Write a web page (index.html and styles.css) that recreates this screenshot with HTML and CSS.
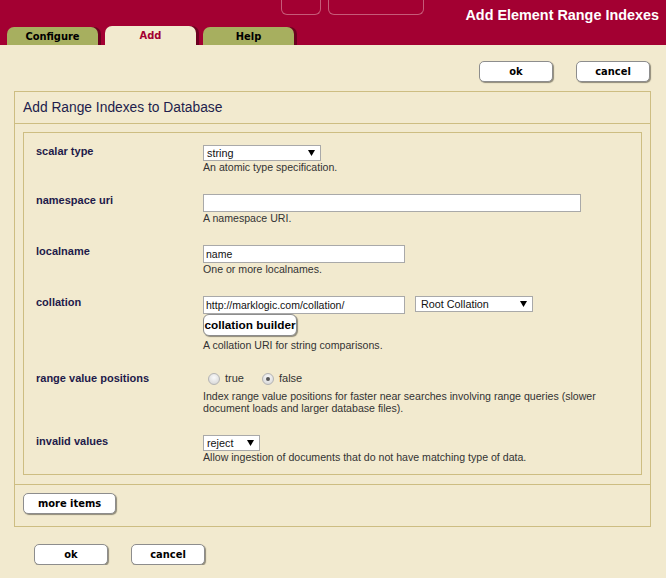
FILE: index.html
```html
<!DOCTYPE html>
<html>
<head>
<meta charset="utf-8">
<title>Add Element Range Indexes</title>
<link rel="stylesheet" href="styles.css">
</head>
<body>
<header class="hdr">
  <div class="hdr-top">
    <span class="deco deco1"></span>
    <span class="deco deco2"></span>
    <h1 class="app-title">Add Element Range Indexes</h1>
  </div>
  <nav class="tabs">
    <a class="tab">Configure</a>
    <a class="tab active">Add</a>
    <a class="tab">Help</a>
  </nav>
</header>
<main class="content">
  <div class="actions actions-top">
    <button class="btn btn-ok">ok</button>
    <button class="btn btn-cancel">cancel</button>
  </div>
  <section class="panel">
    <h2 class="panel-title">Add Range Indexes to Database</h2>
    <div class="panel-body">
      <div class="fields">
        <div class="row">
          <div class="label">scalar type</div>
          <div class="ctrl">
            <div class="select w-scalar"><span>string</span><svg width="7" height="6" viewBox="0 0 7 6"><path d="M0 0H7L3.5 6Z" fill="#000"/></svg></div>
            <div class="desc">An atomic type specification.</div>
          </div>
        </div>
        <div class="row">
          <div class="label">namespace uri</div>
          <div class="ctrl">
            <input class="text w-ns" type="text" value="">
            <div class="desc">A namespace URI.</div>
          </div>
        </div>
        <div class="row">
          <div class="label">localname</div>
          <div class="ctrl">
            <input class="text w-local" type="text" value="name">
            <div class="desc">One or more localnames.</div>
          </div>
        </div>
        <div class="row">
          <div class="label">collation</div>
          <div class="ctrl">
            <div class="inline">
              <input class="text w-local" type="text" value="http://marklogic.com/collation/">
              <div class="select w-coll"><span>Root Collation</span><svg width="7" height="6" viewBox="0 0 7 6"><path d="M0 0H7L3.5 6Z" fill="#000"/></svg></div>
            </div>
            <button class="builder">collation builder</button>
            <div class="desc desc-gap">A collation URI for string comparisons.</div>
          </div>
        </div>
        <div class="row">
          <div class="label">range value positions</div>
          <div class="ctrl">
            <div class="radios">
              <span class="radio"></span><span class="rtext">true</span>
              <span class="radio checked"></span><span class="rtext">false</span>
            </div>
            <div class="desc">Index range value positions for faster near searches involving range queries (slower document loads and larger database files).</div>
          </div>
        </div>
        <div class="row">
          <div class="label">invalid values</div>
          <div class="ctrl">
            <div class="select w-invalid"><span>reject</span><svg width="7" height="6" viewBox="0 0 7 6"><path d="M0 0H7L3.5 6Z" fill="#000"/></svg></div>
            <div class="desc">Allow ingestion of documents that do not have matching type of data.</div>
          </div>
        </div>
      </div>
    </div>
    <div class="more-bar">
      <button class="btn btn-more">more items</button>
    </div>
  </section>
  <div class="actions actions-bottom">
    <button class="btn btn-ok">ok</button>
    <button class="btn btn-cancel">cancel</button>
  </div>
</main>
</body>
</html>
```
FILE: styles.css
```css
html, body {
  margin: 0;
  padding: 0;
  background: #f2eacf;
  font-family: "Liberation Sans", Arial, sans-serif;
  font-size: 11px;
  color: #333;
}

.hdr {
  background: #a30032;
  height: 45px;
  display: flex;
  flex-direction: column;
  overflow: hidden;
}

.hdr-top {
  height: 26px;
  display: flex;
  align-items: flex-start;
}

.deco {
  display: block;
  height: 15px;
  margin-top: -1px;
  border: 1px solid #c65b78;
  border-top: none;
  border-radius: 0 0 6px 6px;
}
.deco1 { width: 38px; margin-left: 281px; }
.deco2 { width: 94px; margin-left: 7px; }

.app-title {
  margin: 0 7px 0 auto;
  padding-top: 7px;
  font-size: 14.4px;
  line-height: 16px;
  font-weight: bold;
  color: #fff;
}

.tabs {
  height: 19px;
  display: flex;
  align-items: flex-end;
  gap: 12px;
  padding-left: 7px;
}

.tab {
  width: 91px;
  height: 18px;
  line-height: 19px;
  text-align: center;
  background: #a7af5f;
  border-radius: 7px 7px 0 0;
  box-shadow: 3px 0 0 #6c0020;
  font-family: "DejaVu Sans Condensed", "DejaVu Sans", sans-serif;
  font-weight: bold;
  font-size: 11px;
  color: #000;
  margin-right: -5px;
}
.tab.active {
  height: 19px;
  line-height: 20px;
  background: #f2eacf;
  color: #a30032;
}

.content {
  padding: 16px 15px 0 14px;
}

.actions {
  display: flex;
  gap: 23px;
}
.actions-top {
  justify-content: flex-end;
  padding-right: 1px;
  margin-bottom: 9px;
}
.actions-bottom {
  padding-left: 20px;
  margin-top: 17px;
}

.btn {
  width: 74px;
  height: 21px;
  padding: 0;
  background: #fff;
  border: 1px solid #8d8d8d;
  border-radius: 5px;
  box-shadow: 1px 1px 1px #8f8a78;
  font-family: "DejaVu Sans Condensed", "DejaVu Sans", sans-serif;
  font-weight: bold;
  font-size: 11px;
  color: #000;
}
.btn-more { width: 93px; }

.panel {
  border: 1px solid #cdbd82;
}

.panel-title {
  margin: 0;
  height: 31px;
  line-height: 31px;
  padding-left: 8px;
  border-bottom: 1px solid #cdbd82;
  font-size: 13.8px;
  font-weight: normal;
  color: #221d4c;
}

.panel-body {
  padding: 8px 8px 9px 8px;
}

.fields {
  border: 1px solid #cdbd82;
  padding: 12px 12px 11px 12px;
  display: flex;
  flex-direction: column;
  gap: 21px;
}

.row {
  display: grid;
  grid-template-columns: 167px 1fr;
}

.label {
  font-weight: bold;
  font-size: 11px;
  line-height: 13px;
  color: #1e1a4a;
}

.ctrl {
  display: flex;
  flex-direction: column;
  align-items: flex-start;
}

.desc {
  font-size: 10.6px;
  line-height: 12px;
  color: #333;
}
.desc-gap { margin-top: 3px; }

.select {
  box-sizing: border-box;
  height: 16px;
  display: flex;
  align-items: center;
  justify-content: space-between;
  padding: 0 5px 0 3px;
  background: #fff;
  border: 1px solid #a9a9a9;
  font-size: 10.8px;
  color: #111;
}
.w-scalar { width: 118px; }
.w-coll { width: 118px; padding-left: 5px; }
.w-invalid { width: 57px; }

.text {
  box-sizing: border-box;
  height: 18px;
  margin: 0;
  padding: 0 2px;
  border: 1px solid #a9a9a9;
  background: #fff;
  font-family: "Liberation Sans", Arial, sans-serif;
  font-size: 10.5px;
  color: #111;
}
.w-ns { width: 378px; }
.w-local { width: 202px; }

.inline {
  display: flex;
  gap: 10px;
}

.builder {
  height: 22px;
  width: 94px;
  padding: 0;
  white-space: nowrap;
  background: #fff;
  border: 1px solid #8d8d8d;
  border-radius: 6px;
  box-shadow: 1px 1px 1px #8f8a78;
  font-family: "Liberation Sans", Arial, sans-serif;
  font-weight: bold;
  font-size: 11.8px;
  color: #000;
}

.radios {
  height: 18px;
  display: flex;
  align-items: flex-start;
  padding-left: 5px;
}
.radio {
  box-sizing: border-box;
  width: 12px;
  height: 12px;
  margin-top: 1px;
  border-radius: 50%;
  border: 1px solid #b4b4b4;
  background: radial-gradient(circle at 50% 35%, #fafafa 0%, #e2e2e2 60%, #cfcfcf 100%);
  display: flex;
  align-items: center;
  justify-content: center;
}
.radio.checked::after {
  content: "";
  width: 4px;
  height: 4px;
  border-radius: 50%;
  background: #555;
}
.rtext {
  font-size: 11px;
  line-height: 13px;
  margin-left: 5px;
  margin-right: 18px;
  color: #333;
}

.more-bar {
  border-top: 1px solid #cdbd82;
  padding: 8px 8px 12px 8px;
}
```
